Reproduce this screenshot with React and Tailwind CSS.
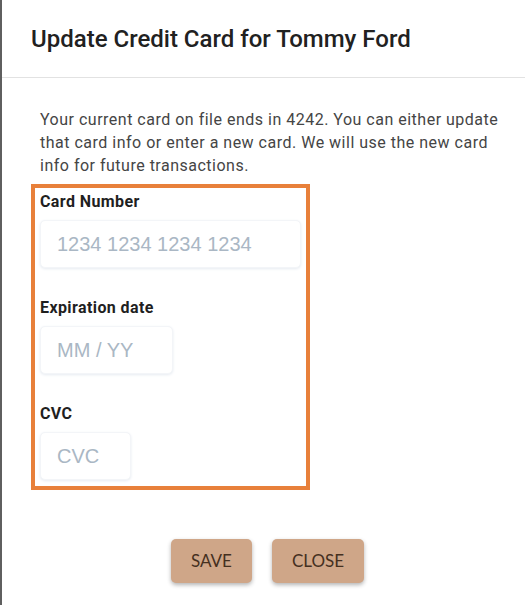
export default function App() {
    const fields = [
        { label: "Card Number", placeholder: "1234 1234 1234 1234", width: "w-[261px]" },
        { label: "Expiration date", placeholder: "MM / YY", width: "w-[133px]" },
        { label: "CVC", placeholder: "CVC", width: "w-[91px]" },
    ];

    return (
        <div className="w-[525px] h-[605px] bg-white border-l-2 border-[#5f5f5f] font-['Roboto',sans-serif]">
            <div className="h-[78px] border-b border-[#e2e2e2] pl-[29px] pt-[24px]">
                <h2 className="text-[24px] leading-[30px] font-medium text-[#212121]">
                    Update Credit Card for Tommy Ford
                </h2>
            </div>

            <div className="pl-[29px] pt-[30px]">
                <p className="pl-[9px] pr-[20px] text-[16px] leading-[23px] tracking-[0.5px] text-[#454545]">
                    Your current card on file ends in 4242. You can either update that card info or enter a new card. We will use the new card info for future transactions.
                </p>

                <div className="mt-[7px] w-[279px] h-[306px] border-4 border-[#e8803a] pl-[5px] pt-[4px]">
                    {fields.map((f, i) => (
                        <div key={f.label} className={i > 0 ? "mt-[30px]" : ""}>
                            <div className="text-[16px] leading-[20px] font-bold tracking-[0.4px] text-[#1f1f1f]">{f.label}</div>
                            <div
                                className={`${f.width} mt-[8px] h-[48px] flex items-center pl-[16px] bg-white rounded-[5px] border border-[#f3f5f8] shadow-[0_1px_3px_0_#e6ebf1] font-['Liberation_Sans',sans-serif] text-[20px] text-[#aab7c4]`}
                            >
                                {f.placeholder}
                            </div>
                        </div>
                    ))}
                </div>

                <div className="mt-[49px] flex justify-center gap-[20px] pr-[21px]">
                    <button className="h-[44px] px-[20px] rounded-[5px] bg-[#cfa688] text-[#45301f] font-['Lato',sans-serif] text-[17px] shadow-[0_2px_4px_rgba(0,0,0,0.3)]">
                        SAVE
                    </button>
                    <button className="h-[44px] px-[20px] rounded-[5px] bg-[#cfa688] text-[#45301f] font-['Lato',sans-serif] text-[17px] shadow-[0_2px_4px_rgba(0,0,0,0.3)]">
                        CLOSE
                    </button>
                </div>
            </div>
        </div>
    );
}
